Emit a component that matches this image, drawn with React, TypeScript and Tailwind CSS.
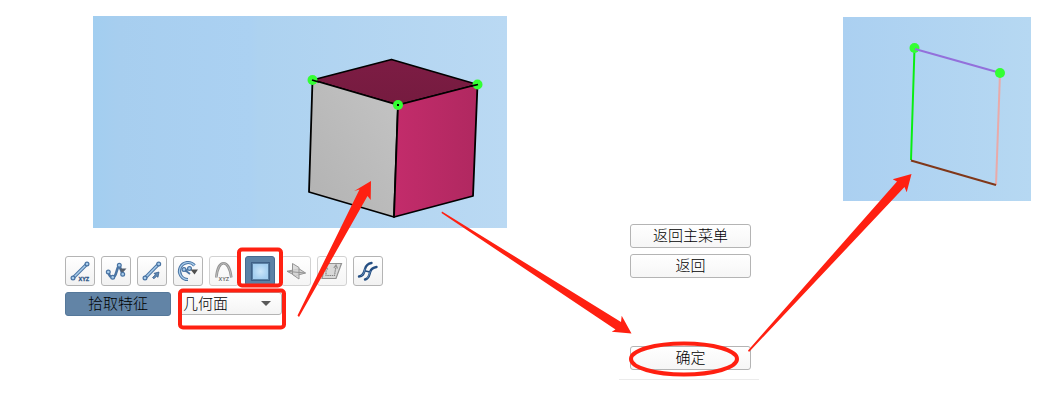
import type { ReactNode } from 'react';

const BLUE = '#4a74a3';
const FILL = '#a9cdec';

type Tool = { name: string; icon: ReactNode; active?: boolean; faded?: boolean };

function Node({ x, y }: { x: number; y: number }) {
  return <circle cx={x} cy={y} r="1.9" fill={FILL} stroke={BLUE} strokeWidth="1.2" />;
}

function Bar({ x1, y1, x2, y2 }: { x1: number; y1: number; x2: number; y2: number }) {
  return (
    <>
      <line x1={x1} y1={y1} x2={x2} y2={y2} stroke={BLUE} strokeWidth="3.4" />
      <line x1={x1} y1={y1} x2={x2} y2={y2} stroke={FILL} strokeWidth="1.4" />
      <Node x={x1} y={y1} />
      <Node x={x2} y={y2} />
    </>
  );
}

const tools: Tool[] = [
  {
    name: '坐标点',
    icon: (
      <>
        <Bar x1={8} y1={22} x2={22} y2={8} />
        <text x="13.5" y="24.5" fontSize="5.5" fontWeight="700" fill="#2c5486" stroke="#2c5486" strokeWidth="0.3">XYZ</text>
      </>
    ),
  },
  {
    name: '曲线',
    icon: (
      <>
        <path d="M7.3 16C8 19 9.5 21.5 11.7 21.3C16 21 15 12 18.3 9.5L21.7 18.3" fill="none" stroke={BLUE} strokeWidth="2.6" />
        <path d="M18.5 12.5h7l-4.5 5z" fill="#555e6b" />
        <Node x={7.3} y={16} />
        <Node x={11.7} y={21.3} />
        <Node x={18.3} y={9.3} />
        <Node x={21.7} y={18.3} />
      </>
    ),
  },
  {
    name: '直线',
    icon: (
      <>
        <Bar x1={8} y1={22} x2={21.7} y2={8} />
        <path d="M15.5 21.5L18.3 18.8L17 17.3L22 16L21 21.3L19.600 20.2L17 22.8z" fill="#5f87b0" stroke="#2c5486" strokeWidth="0.7" />
      </>
    ),
  },
  {
    name: '圆弧',
    icon: (
      <>
        <path d="M21.5 9.500A8.5 8.5 0 1 0 15 23.5" fill="none" stroke={BLUE} strokeWidth="3.2" />
        <path d="M21.5 9.500A8.5 8.5 0 1 0 15 23.5" fill="none" stroke={FILL} strokeWidth="1.2" />
        <path d="M10.5 13L17 18M12 15.5L17 11.5" stroke={BLUE} strokeWidth="1.8" />
        <Node x={11} y={13.5} />
        <Node x={16.5} y={12.5} />
        <path d="M17.500 13.500H25L21.500 18.5z" fill="#505050" />
      </>
    ),
  },
  {
    name: '抛物线',
    faded: true,
    icon: (
      <>
        <path d="M7.3 21.5C9 2.5 20 2.5 22.3 21.5" fill="none" stroke="#929292" strokeWidth="2.6" />
        <path d="M7.3 21.5C9 2.5 20 2.5 22.3 21.5" fill="none" stroke="#c8c8c8" strokeWidth="0.8" />
        <text x="9.5" y="24.5" fontSize="5.5" fontWeight="700" fill="#6e6e6e" stroke="#fafafa" strokeWidth="1" paintOrder="stroke">XYZ</text>
      </>
    ),
  },
  {
    name: '几何面',
    active: true,
    icon: (
      <>
        <defs>
          <radialGradient id="face">
            <stop offset="0" stopColor="#cce6fa" />
            <stop offset="1" stopColor="#a5cff1" />
          </radialGradient>
        </defs>
        <rect x="6.5" y="6.5" width="18" height="18" fill="none" stroke="#213f68" strokeWidth="1.2" strokeDasharray="1 1" />
        <rect x="8" y="8" width="15" height="15" fill="url(#face)" />
      </>
    ),
  },
  {
    name: '相交面',
    faded: true,
    icon: (
      <g fill="#d4d4d4" stroke="#949494" strokeWidth="1" strokeLinejoin="round">
        <path d="M6 15.3L18 12.8L24.5 17L14.5 19.7z" />
        <path d="M11.5 7.5L18 11.5V23L11.5 18.5z" fillOpacity="0.8" />
        <path d="M6 15.3L15 16.2L24.5 17" />
      </g>
    ),
  },
  {
    name: '平面',
    faded: true,
    icon: (
      <g fill="none" stroke="#929292" strokeWidth="1.2">
        <path d="M8.5 7.5H24.5L19 22.5H5z" fill="#d9d9d9" />
        <path d="M9 12V19.5H17.500L19 10" stroke="#858585" strokeDasharray="1.5 0.7" />
        <path d="M7.3 13.5L9 10.5L10.8 13.5M16.8 12L19 9L20.500 12.5" />
      </g>
    ),
  },
  {
    name: '样条曲线',
    icon: (
      <g fill="none" strokeLinecap="round" stroke="#244e82" strokeWidth="2.4">
        <path d="M6 20.5C10.5 20.5 11 16.5 12 13C13 9.5 15 7.5 18.5 7" />
        <path d="M12 23.5C16.5 22.5 16 19 17.3 15.5C18.3 12.8 20.5 11.5 23.5 11" />
        <path d="M12.5 15L17 16" strokeWidth="1.6" />
        <path d="M8.5 19.5C11 18 11 16 12 13M14.3 22C16 20.5 16 18 17.3 15.5" stroke="#7da2ca" strokeWidth="0.7" />
      </g>
    ),
  },
];

function ToolButton({ name, icon, active, faded }: Tool) {
  const look = active
    ? 'border-[#466b8f] bg-[#5c82a6]'
    : faded
      ? 'border-[#d2d2d2] bg-linear-to-b from-white to-[#f5f5f5]'
      : 'border-[#b4b4b4] bg-linear-to-b from-white to-[#f1f1f1]';
  return (
    <button type="button" aria-label={name} className={`size-[30px] shrink-0 rounded-[3px] border ${look}`}>
      <svg viewBox="1 1 28 28" className="size-7" aria-hidden="true">
        {icon}
      </svg>
    </button>
  );
}

function PlainButton({ children }: { children: ReactNode }) {
  return (
    <button
      type="button"
      className="flex h-6 w-[121px] items-center justify-center rounded-[3px] border border-[#b4b4b4] bg-linear-to-b from-white to-[#f6f6f6]"
    >
      {children}
    </button>
  );
}

function CubeView() {
  return (
    <svg viewBox="0 0 414 212" className="block w-full" role="img">
      <defs>
        <linearGradient id="sky">
          <stop offset="0" stopColor="#a2cef0" />
          <stop offset="0.06" stopColor="#a7ceef" />
          <stop offset="0.38" stopColor="#abd1f2" />
          <stop offset="0.4" stopColor="#add2f0" />
          <stop offset="1" stopColor="#bad9f3" />
        </linearGradient>
        <linearGradient id="front" x1="0" y1="1" x2="1" y2="0">
          <stop offset="0" stopColor="#b2b2b2" />
          <stop offset="1" stopColor="#c4c4c4" />
        </linearGradient>
        <linearGradient id="side">
          <stop offset="0" stopColor="#c32c6b" />
          <stop offset="1" stopColor="#b02860" />
        </linearGradient>
        <linearGradient id="top" x1="0" y1="0" x2="0" y2="1">
          <stop offset="0" stopColor="#7d1c44" />
          <stop offset="1" stopColor="#751b3f" />
        </linearGradient>
      </defs>
      <rect width="414" height="212" fill="url(#sky)" />
      <g stroke="#000" strokeWidth="1.8" strokeLinejoin="round">
        <path d="M219.500 64L298.500 43.500L384.500 68.500L305 89z" fill="url(#top)" />
        <path d="M219.500 64L305 89L301 201L216 176z" fill="url(#front)" />
        <path d="M305 89L384.500 68.500L380 180L301 201z" fill="url(#side)" />
      </g>
      <g fill="#33ff33">
        <circle cx="219.500" cy="64" r="5" />
        <circle cx="384.500" cy="68.500" r="5" />
        <circle cx="305" cy="89" r="5" />
      </g>
      <path d="M219 64L226 66M385 68.500L378 70.200M304 89h2" stroke="#000" strokeWidth="1.8" />
    </svg>
  );
}

function OutlineView() {
  return (
    <svg viewBox="0 0 188 184" className="block w-full" role="img">
      <defs>
        <linearGradient id="pale">
          <stop offset="0" stopColor="#abd0f1" />
          <stop offset="1" stopColor="#b6d8f2" />
        </linearGradient>
      </defs>
      <rect width="188" height="184" fill="url(#pale)" />
      <path d="M71.5 31L68 143" stroke="#09ee12" strokeWidth="2" />
      <circle cx="71.5" cy="31" r="5" fill="#33ff33" />
      <g strokeWidth="2">
        <path d="M157 56L153 168" stroke="#e9aaa9" />
        <path d="M72 32L154 55" stroke="#9370db" />
        <path d="M68 143.5L153 168" stroke="#803719" />
      </g>
      <circle cx="157" cy="56" r="5" fill="#33ff33" />
    </svg>
  );
}

function Annotations() {
  return (
    <svg viewBox="0 0 1053 416" className="pointer-events-none absolute inset-x-0 top-0 w-full" aria-hidden="true">
      <g fill="none" stroke="#ff2011" strokeWidth="4">
        <rect x="239" y="249.5" width="42" height="36" rx="3" />
        <rect x="180" y="290.5" width="104" height="37" rx="3" />
        <ellipse cx="684" cy="359" rx="53" ry="15.5" strokeWidth="4" />
      </g>
      <g fill="#ff2011">
        <path d="M297.5 315.5L359.5 189.5L354.3 191L371 181L370.7 200L367.5 196L299 317z" />
        <path d="M442 211.5L621 322L621.7 315.7L631.5 333.5L611.700 331.7L615.500 329.500L441.5 213z" />
        <path d="M748 350.5L897 181.500L892.7 179.3L911.5 174L906.7 192.3L904.5 187L749 352z" />
      </g>
    </svg>
  );
}

export default function App() {
  return (
    <main className="relative min-h-screen bg-white pr-[22px] pl-[65px] font-['Liberation_Sans','Noto_Sans_CJK_SC',sans-serif] text-[15px] leading-5 font-light text-black">
      <div className="grid grid-cols-[470fr_140px_188fr] gap-x-[84px]">
        <section className="pt-4">
          <div className="px-7">
            <CubeView />
          </div>
          <div className="mt-7 flex gap-1.5">
            {tools.map((tool) => (
              <ToolButton key={tool.name} {...tool} />
            ))}
          </div>
          <div className="mt-1.5 flex gap-2">
            <button
              type="button"
              className="h-6 w-[106px] rounded-[3px] border border-[#55789a] bg-[#6284a6]"
            >
              拾取特征
            </button>
            <div className="relative">
              <select
                aria-label="拾取特征"
                className="block h-[23px] w-[103px] appearance-none rounded-[3px] border border-[#b4b4b4] bg-linear-to-b from-white to-[#f4f4f4] pl-[3px]"
              >
                <option>几何面</option>
              </select>
              <svg viewBox="0 0 10 5" className="pointer-events-none absolute top-[9px] right-[11px] h-[5px] w-2.5" aria-hidden="true">
                <path d="M0 0H10L5 5z" fill="#5a5a5a" />
              </svg>
            </div>
          </div>
        </section>

        <section className="flex flex-col border-b border-[#ebebeb] pt-56 pb-[9px] pl-[11px]">
          <div className="flex flex-col gap-1.5">
            <PlainButton>返回主菜单</PlainButton>
            <PlainButton>返回</PlainButton>
          </div>
          <div className="mt-[68px]">
            <PlainButton>确定</PlainButton>
          </div>
        </section>

        <section className="pt-[17px]">
          <OutlineView />
        </section>
      </div>
      <Annotations />
    </main>
  );
}
